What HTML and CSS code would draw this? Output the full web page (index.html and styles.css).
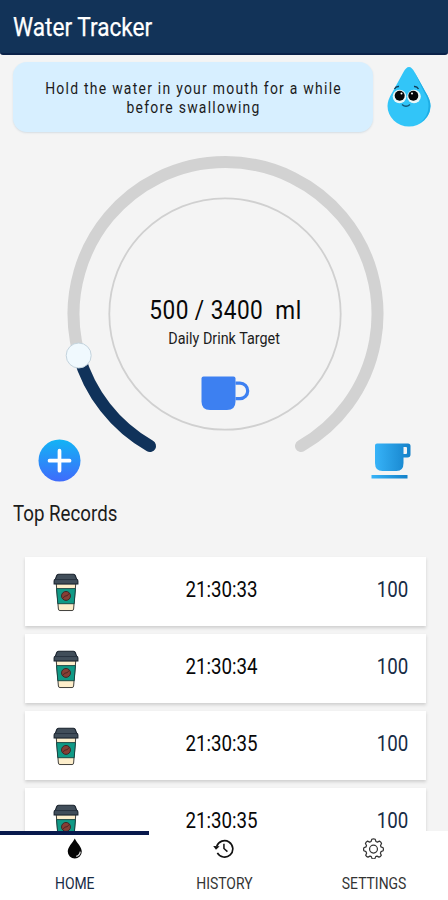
FILE: index.html
```html
<!DOCTYPE html>
<html lang="en">
<head>
<meta charset="utf-8">
<title>Water Tracker</title>
<link rel="stylesheet" href="styles.css">
</head>
<body>
<svg class="defs" width="0" height="0" aria-hidden="true">
  <defs>
    <linearGradient id="plusFill" x1="0" y1="0" x2="0" y2="1"><stop offset="0" stop-color="#12b4f5"/><stop offset="1" stop-color="#3f6bfb"/></linearGradient>
    <linearGradient id="cupFill" x1="0" y1="0" x2="1" y2="0"><stop offset="0" stop-color="#37b3f8"/><stop offset="1" stop-color="#1481c9"/></linearGradient>
    <symbol id="coffee" viewBox="0 0 28 40">
      <path d="M4 11h20l-2.200 26q-.1 1.500-1.600 1.500H7.800q-1.500 0-1.600-1.500z" fill="#fdeecb" stroke="#3b3a35" stroke-width="1"/>
      <path d="M4.300 16h19.400l-1.300 15.500H5.600z" fill="#109a86" stroke="#153c3b" stroke-width=".9"/>
      <circle cx="14" cy="23.500" r="4.600" fill="#873f35" stroke="#3a2927" stroke-width="1"/>
      <path d="M11 26q1.500-3 3-2.500t3-2.500" fill="none" stroke="#4a2622"/>
      <path d="M4.500 2.500Q5 1.300 6.300 1.300h15.400q1.300 0 1.800 1.200L25 6.500q1.200.3 1.200 1.700v3H1.800v-3q0-1.400 1.200-1.700z" fill="#414e5a" stroke="#17202b" stroke-width="1.100"/>
      <path d="M3.500 6.700h21" stroke="#27323f" stroke-width="1"/>
    </symbol>
  </defs>
</svg>
<div class="app">
  <header class="bar"><h1 class="t title">Water Tracker</h1></header>
  <section class="tip">
    <p class="bubble"><span class="t tip-text">Hold the water in your mouth for a while<br>before swallowing</span></p>
    <svg class="mascot" viewBox="0 0 44 62">
      <path d="M22 1C24 1 26 3 27.500 6L38.500 26Q43.500 34 43.500 40A21.500 20.500 0 0 1 .5 40Q.5 34 5.500 26L16.500 6C18 3 20 1 22 1Z" fill="#32c5f8"/>
      <path d="M27.500 6L38.500 26Q43.500 34 43.500 40A21.500 20.500 0 0 1 32 57.500Q41.500 51 41.500 40Q41.500 33 37 26Z" fill="#1eaee5"/>
      <circle cx="12.500" cy="30.500" r="6.800" fill="#e9f7f8"/><circle cx="27" cy="30.500" r="6.800" fill="#e9f7f8"/>
      <circle cx="12.700" cy="29.800" r="5" fill="#050708"/><circle cx="26.300" cy="29.800" r="5" fill="#050708"/>
      <circle cx="14.500" cy="27.500" r="1" fill="#fff"/><circle cx="25" cy="27.500" r="1" fill="#fff"/>
      <path d="M7.500 23q1.500-3 4.500-2.500M27 20.500q3-.3 4.500 2.500" fill="none" stroke="#123b55" stroke-width="1.400"/>
      <path d="M15 38.500q4 3.600 8 0" fill="none" stroke="#145676" stroke-width="1.400"/>
    </svg>
  </section>
  <section class="hero">
    <svg class="gauge" viewBox="0 0 448 350">
      <path d="M150 314A152 152 0 1 1 301 314" fill="none" stroke="#d2d2d2" stroke-width="12" stroke-linecap="round"/>
      <path d="M150 314A152 152 0 0 1 78.700 223" fill="none" stroke="#10325a" stroke-width="12" stroke-linecap="round"/>
      <circle cx="225" cy="182" r="115.700" fill="none" stroke="#d0d0d0" stroke-width="1.800"/>
      <circle cx="78.700" cy="223.500" r="12.500" fill="#f0f9fe" stroke="#c3d3dd" stroke-width="1"/>
      <path d="M201.500 246.500q0-2 2-2h30q2 0 2 2v23q0 8.500-8.500 8.500h-17q-8.500 0-8.500-8.500z" fill="#3d80f1"/>
      <path d="M235.500 251.200h4.500a7.700 7.700 0 0 1 0 15.400h-4.500" fill="none" stroke="#3d80f1" stroke-width="3.200"/>
    </svg>
    <div class="reading">
      <span class="t amount">500 / 3400&nbsp; ml</span>
      <span class="t target">Daily Drink Target</span>
    </div>
    <div class="actions">
      <svg class="plus" viewBox="0 0 44 44"><circle cx="22" cy="22" r="21.500" fill="url(#plusFill)"/><path d="M22 12v20.500M11.800 22.200h20.500" stroke="#fff" stroke-width="3.800" stroke-linecap="round"/></svg>
      <svg class="cup" viewBox="0 0 40 37"><path fill-rule="evenodd" d="M6 .5h31q2.500 0 2.500 2.500v8.500q0 3-3 3h-4V20q0 8-7 8H11.500Q4 28 4 20V2.500q0-2 2-2zM32.500 4v7h2.500q1 0 1-1V5q0-1-1-1z" fill="url(#cupFill)"/><path d="M.5 32h36v3.500H.5z" fill="url(#cupFill)"/></svg>
    </div>
  </section>
  <h2 class="t heading">Top Records</h2>
  <ul class="records">
    <li class="record"><svg class="coffee"><use href="#coffee"/></svg><span class="t time">21:30:33</span><span class="t ml">100</span></li>
    <li class="record"><svg class="coffee"><use href="#coffee"/></svg><span class="t time">21:30:34</span><span class="t ml">100</span></li>
    <li class="record"><svg class="coffee"><use href="#coffee"/></svg><span class="t time">21:30:35</span><span class="t ml">100</span></li>
    <li class="record"><svg class="coffee"><use href="#coffee"/></svg><span class="t time">21:30:35</span><span class="t ml">100</span></li>
  </ul>
  <nav class="nav">
    <a class="tab active">
      <svg class="icon" viewBox="0 0 24 24"><path d="M12.300 .5C15 6 20.300 10 20.300 15.500A8 8 0 0 1 4.300 15.500C4.300 10 9.500 6 12.300 .5Z" fill="#050505"/><path d="M14 21q4-1.200 4.600-5.500" fill="none" stroke="#ddd" stroke-width="1.400"/></svg>
      <span class="t">HOME</span></a>
    <a class="tab">
      <svg class="icon" viewBox="0 0 24 24"><path d="M4.300 9.500A9.400 9.400 0 1 1 5 17" fill="none" stroke="#111" stroke-width="1.900" /><path d="M.2 9l3.200 4.500L7.600 9.500z" fill="#111"/><path d="M12.500 6.500V12l4 3.600" fill="none" stroke="#111" stroke-width="1.700"/></svg>
      <span class="t">HISTORY</span></a>
    <a class="tab">
      <svg class="icon" viewBox="0 0 24 24" fill="none" stroke="#333" stroke-width="1.400" stroke-linejoin="round"><path d="M10 1.500Q12 .5 14 1.500L14.800 4 16.400 4.700 18.800 3.600Q20.700 4.500 21.200 6.300L20 8.500 20.600 10.200 23 11.200Q23.600 13 23 14.600L20.600 15.600 19.900 17.300 20.900 19.600Q20.100 21.300 18.300 21.900L16 20.700 14.500 21.300 13.600 23.600Q12 24 10.400 23.600L9.500 21.300 8 20.700 5.700 21.900Q3.900 21.300 3.100 19.600L4.100 17.300 3.400 15.600 1 14.600Q.4 13 1 11.200L3.400 10.200 4 8.500 2.800 6.300Q3.300 4.500 5.200 3.600L7.600 4.700 9.200 4z"/><circle cx="12" cy="12.700" r="4.500"/></svg>
      <span class="t">SETTINGS</span></a>
  </nav>
</div>
</body>
</html>
```
FILE: styles.css
```css
* { box-sizing: border-box; margin: 0; padding: 0; }
body { width: 448px; height: 900px; overflow: hidden; background: #f4f4f4; color: #1c1c1c; font-family: Roboto, "Liberation Sans", sans-serif; }
.defs { position: absolute; }
.app { height: 900px; display: flex; flex-direction: column; overflow: hidden; }
.t { display: inline-block; font-weight: 400; white-space: nowrap; transform: scaleX(.87); transform-origin: center; }

.bar { height: 55px; flex: none; display: flex; align-items: center; padding: 1px 0 0 13px; background: #123358; border-bottom: 2px solid #0a2249; border-radius: 0 0 3px 3px; }
.title { font-size: 26px; line-height: 30px; color: #fff; transform-origin: left; -webkit-text-stroke: .25px #fff; }

.tip { height: 77px; flex: none; display: flex; padding: 7px 17px 0 13px; justify-content: space-between; }
.bubble { width: 360px; height: 70px; display: flex; align-items: center; justify-content: center; padding: 2px 0 0 1px; background: #d7efff; border-radius: 14px; box-shadow: 0 1px 2px #d5dde3; text-align: center; }
.tip-text { font-size: 16px; line-height: 19px; letter-spacing: 1.45px; }
.mascot { width: 44px; height: 62px; margin-top: 4px; }

.hero { height: 350px; flex: none; display: grid; grid-template: 350px / 448px; }
.hero > * { grid-area: 1 / 1; }
.gauge { width: 448px; height: 350px; }
.reading { display: flex; flex-direction: column; align-items: center; padding: 163px 0 0 3px; }
.amount { font-size: 26px; line-height: 31px; color: #080808; letter-spacing: .5px; }
.target { font-size: 16.500px; line-height: 22px; margin: 2px 2px 0 0; }
.actions { align-self: end; display: flex; justify-content: space-between; align-items: center; padding: 0 37px 0 38px; }
.plus { width: 43px; height: 43px; }
.cup { width: 40px; height: 37px; margin-top: 1px; }

.heading { height: 75px; flex: none; padding: 19px 0 0 13px; font-size: 21.500px; line-height: 25px; transform-origin: 13px 50%; align-self: flex-start; }

.records { height: 274px; flex: none; display: flex; flex-direction: column; gap: 8px; padding: 0 22px 0 25px; list-style: none; }
.record { height: 69px; flex: none; display: grid; grid-template-columns: 82px 1fr 82px; align-items: center; background: #fff; box-shadow: 0 2px 3px #cfcfcf; }
.coffee { width: 28px; height: 39px; justify-self: center; margin-top: 1px; }
.time, .ml { font-size: 21.500px; line-height: 20px; margin-top: -4px; }
.time { justify-self: center; margin-left: -8px; color: #080808; }
.ml { justify-self: end; margin-right: 18px; color: #172b45; transform-origin: right; }

.nav { position: relative; z-index: 1; height: 69px; flex: none; display: grid; grid-template-columns: repeat(3, 1fr); background: #fff; }
.tab { display: flex; flex-direction: column; align-items: center; border-top: 4px solid transparent; padding-left: 1px; font-size: 16px; line-height: 20px; color: #333; }
.tab.active { border-color: #08194c; color: #172b45; }
.icon { width: 21px; height: 21px; margin: 3px 1px 15px 0; }
```
